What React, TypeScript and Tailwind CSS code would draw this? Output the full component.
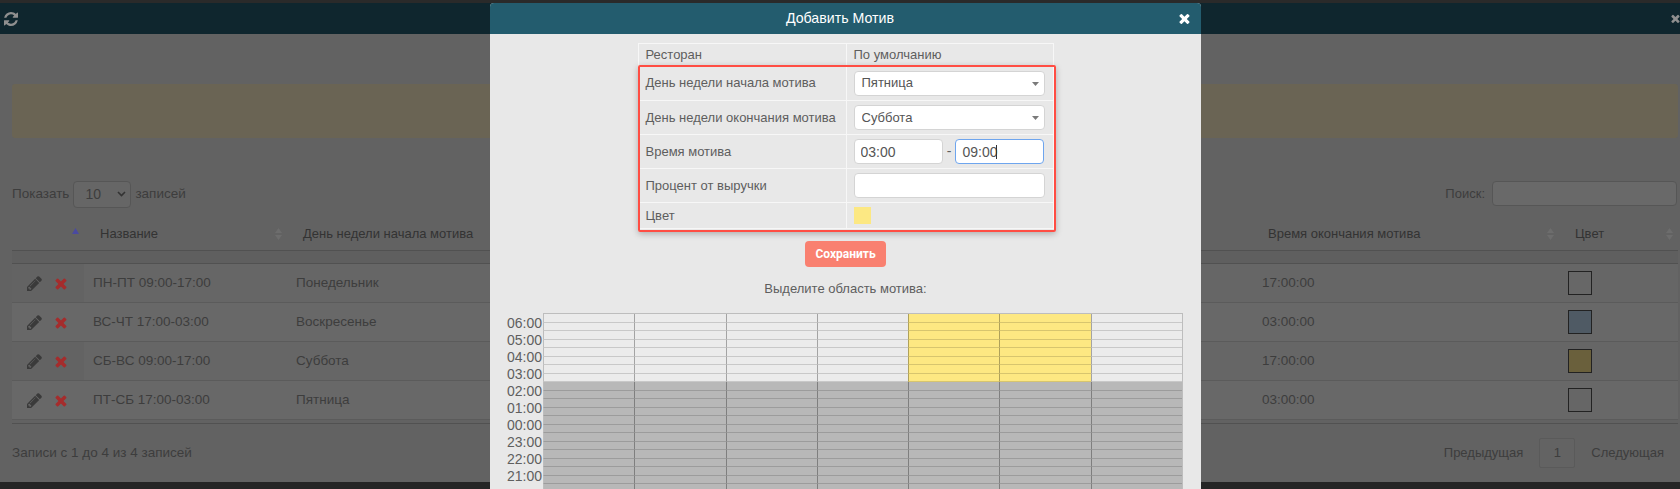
import React from 'react'

const rows = [
  { name: 'ПН-ПТ 09:00-17:00', day: 'Понедельник', end: '17:00:00', color: 'bg-[#676767]', first: 'bg-[#636363]', bg: 'bg-[#666666]' },
  { name: 'ВС-ЧТ 17:00-03:00', day: 'Воскресенье', end: '03:00:00', color: 'bg-[#4f5a64]', first: 'bg-[#686868]', bg: 'bg-[#686868]' },
  { name: 'СБ-ВС 09:00-17:00', day: 'Суббота', end: '17:00:00', color: 'bg-[#6a603c]', first: 'bg-[#636363]', bg: 'bg-[#666666]' },
  { name: 'ПТ-СБ 17:00-03:00', day: 'Пятница', end: '03:00:00', color: 'bg-[#666666]', first: 'bg-[#686868]', bg: 'bg-[#686868]' },
]

const hours = [6, 5, 4, 3, 2, 1, 0, 23, 22, 21]

// font awesome 4 glyphs, the 5 ones in react-icons are thinner
const TimesIcon = ({ className }: { className?: string }) => (
  <svg viewBox="250 250 1300 1300" fill="currentColor" className={className}>
    <path d="M1490 1322q0 40-28 68l-136 136q-28 28-68 28t-68-28l-294-294-294 294q-28 28-68 28t-68-28l-136-136q-28-28-28-68t28-68l294-294-294-294q-28-28-28-68t28-68l136-136q28-28 68-28t68 28l294 294 294-294q28-28 68-28t68 28l136 136q28 28 28 68t-28 68l-294 294 294 294q28 28 28 68z" />
  </svg>
)

const PencilIcon = ({ className }: { className?: string }) => (
  <svg viewBox="128 128 1536 1536" fill="currentColor" className={className}>
    <path d="M491 1536l91-91-235-235-91 91v107h128v128h107zm523-928q0-22-22-22-10 0-17 7l-542 542q-7 7-7 17 0 22 22 22 10 0 17-7l542-542q7-7 7-17zm-54-192l416 416-832 832h-416v-416zm683 96q0 53-37 90l-166 166-416-416 166-165q36-38 90-38 53 0 91 38l235 234q37 39 37 91z" />
  </svg>
)

const RefreshIcon = ({ className }: { className?: string }) => (
  <svg viewBox="128 128 1536 1536" fill="currentColor" className={className}>
    <path d="M1639 1056q0 5-1 7-64 268-268 434.5t-478 166.5q-146 0-282.5-55t-243.5-157l-129 129q-19 19-45 19t-45-19-19-45v-448q0-26 19-45t45-19h448q26 0 45 19t19 45-19 45l-137 137q71 66 161 102t187 36q134 0 250-65t186-179q11-17 53-117 8-23 30-23h192q13 0 22.5 9.5t9.5 22.5zm25-800v448q0 26-19 45t-45 19h-448q-26 0-45-19t-19-45 19-45l138-138q-148-137-349-137-134 0-250 65t-186 179q-11 17-53 117-8 23-30 23h-199q-13 0-22.5-9.5t-9.5-22.5v-7q65-268 270-434.5t480-166.5q146 0 284 55.5t245 156.5l130-129q19-19 45-19t45 19 19 45z" />
  </svg>
)

const SortIcon = () => (
  <svg width="7" height="12" viewBox="0 0 7 12" className="shrink-0">
    <path d="M3.5 0 7 5H0zM3.5 12 0 7h7z" fill="#6d6d6d" />
  </svg>
)

const Background = () => {
  return (
    <div className="flex h-[489px] flex-col bg-[#626262] text-[13.5px] text-[#3d3d3d]">
      <div className="h-[3px] bg-[#2a2a2a]" />
      <div className="flex h-[31px] items-center justify-between bg-[#0f262e] pl-[4px] text-[#8f8f8f]">
        <RefreshIcon className="h-[14px] w-[14px]" />
        <TimesIcon className="h-[11px] w-[9px]" />
      </div>

      <div className="ml-[12px] mr-[2px] mt-[50px] h-[54px] rounded-[3px] bg-[#6a6454]" />

      <div className="ml-[12px] mr-[3px] mt-[43px] flex h-[26px] items-center justify-between">
        <div className="flex items-center gap-[4px]">
          <span>Показать</span>
          <div className="flex h-[27px] w-[58px] items-center justify-between rounded-[4px] border border-[#565656] bg-[#666666] pl-[11px] pr-[4px] text-[14px]">
            10
            <svg width="9" height="6" viewBox="0 0 9 6"><path d="M1 1l3.5 3.5L8 1" fill="none" stroke="#333" strokeWidth="1.6" /></svg>
          </div>
          <span>записей</span>
        </div>
        <div className="flex items-center gap-[7px] self-start">
          <span className="text-[13px] leading-[25px]">Поиск:</span>
          <div className="h-[25px] w-[185px] rounded-[4px] border border-[#565656] bg-[#696969]" />
        </div>
      </div>

      <div className="ml-[12px] mr-[2px] mt-[13px] grid h-[31px] grid-cols-[72px_203px_1fr_306px_119px] items-center border-b border-[#515151] pb-[2px] text-[13px] text-[#333333]">
        <div className="flex justify-end pb-[7px] pr-[5px]">
          <svg width="7" height="6" viewBox="0 0 7 6"><path d="M3.5 0 7 6H0z" fill="#4a4aa0" /></svg>
        </div>
        <div className="flex items-center justify-between pl-[16px] pr-[5px]">Название<SortIcon /></div>
        <div className="pl-[16px]">День недели начала мотива</div>
        <div className="flex items-center justify-between pl-[15px] pr-[5px]">Время окончания мотива<SortIcon /></div>
        <div className="flex items-center pl-[16px]">Цвет<span className="ml-auto pr-[5px]"><SortIcon /></span></div>
      </div>
      <div className="ml-[12px] mr-[2px] h-[13px] border-b border-[#515151] bg-[#5f5f5f]" />

      <div className="ml-[12px] mr-[2px] flex flex-col">
        {rows.map((r) => (
          <div key={r.name} className={`grid h-[39px] grid-cols-[72px_203px_1fr_306px_119px] items-center border-b border-[#5b5b5b] ${r.bg}`}>
            <div className={`flex h-full items-center gap-[13px] pl-[15px] ${r.first}`}>
              <PencilIcon className="h-[15px] w-[15px] text-[#3a3a3a]" />
              <TimesIcon className="h-[13px] w-[12px] text-[#a52c2c]" />
            </div>
            <div className="pl-[9px]">{r.name}</div>
            <div className="pl-[9px]">{r.day}</div>
            <div className="pl-[9px]">{r.end}</div>
            <div className="pl-[9px]">
              <div className={`h-[24px] w-[24px] border-[1.5px] border-[#222222] ${r.color}`} />
            </div>
          </div>
        ))}
      </div>
      <div className="ml-[12px] mr-[2px] mt-[3px] border-t border-[#515151]" />

      <div className="ml-[12px] mr-[16px] flex flex-1 items-center justify-between">
        <span>Записи с 1 до 4 из 4 записей</span>
        <div className="flex items-center gap-[16px] text-[13px]">
          <span>Предыдущая</span>
          <div className="flex h-[30px] w-[36px] items-center justify-center rounded-[2px] border border-[#5a5a5a] bg-[#636363]">1</div>
          <span>Следующая</span>
        </div>
      </div>
      <div className="h-[7px] bg-[#252525]" />
    </div>
  )
}

const FormRow = ({ label, children, h }: { label: string; children: React.ReactNode; h: string }) => (
  <tr className={h}>
    <td className="border border-[#f7f7f7] pl-[7px] align-middle">{label}</td>
    <td className="border border-[#f7f7f7] px-[7px] align-middle">{children}</td>
  </tr>
)

const SelectBox = ({ value }: { value: string }) => (
  <div className="relative h-[25px] w-[191px]">
    <select
      defaultValue={value}
      className="h-full w-full appearance-none rounded-[4px] border border-[#d4d4d4] bg-white pl-[7px] text-[13px] text-[#555555]"
    >
      <option>{value}</option>
    </select>
    <svg width="7" height="4" viewBox="0 0 7 4" className="absolute right-[6px] top-[11px]">
      <path d="M0 0h7L3.5 4z" fill="#7a7a7a" />
    </svg>
  </div>
)

const TimeGrid = () => {
  return (
    <div className="flex items-start">
      <div className="mt-[2px] flex w-[53px] flex-col items-end pr-[1px] text-[14px] leading-[17px] text-[#5f5f5f]">
        {hours.map((h) => (
          <div key={h}>{String(h).padStart(2, '0')}:00</div>
        ))}
      </div>
      <div className="grid w-[640px] grid-cols-7 border-r border-t border-[#bdbdbd]">
        {Array.from({ length: 30 * 7 }).map((_, i) => {
          const row = Math.floor(i / 7)
          const col = i % 7
          let bg = 'bg-[#ebebeb]'
          if (row >= 8) bg = 'bg-[#b8b8b8]'
          else if (col === 4 || col === 5) bg = 'bg-[#fde882]'
          return (
            <div
              key={i}
              className={`h-[8.5px] border-b border-l border-b-[#00000026] ${col === 0 ? 'border-l-[#bdbdbd]' : 'border-l-[#0000004d]'} ${bg}`}
            />
          )
        })}
      </div>
    </div>
  )
}

const Modal = () => {
  return (
    <div className="absolute left-[490px] top-[3px] w-[711px] overflow-hidden rounded-t-[4px] bg-[#e8e8e8] text-[13px] text-[#5e5e5e]">
      <div className="relative flex h-[31px] items-center justify-center bg-[#235c6e] pr-[11px] text-[14.2px] text-white">
        Добавить Мотив
        <TimesIcon className="absolute right-[11px] top-[10px] h-[11px] w-[11px]" />
      </div>

      <div className="flex flex-col items-center">
        <div className="relative mt-[9px]">
          <table className="w-[416px] table-fixed border-collapse">
            <tbody>
              <tr className="h-[22px]">
                <td className="w-[208px] border border-[#f7f7f7] pl-[7px]">Ресторан</td>
                <td className="border border-[#f7f7f7] pl-[7px]">По умолчанию</td>
              </tr>
              <FormRow h="h-[35px]" label="День недели начала мотива"><SelectBox value="Пятница" /></FormRow>
              <FormRow h="h-[34px]" label="День недели окончания мотива"><SelectBox value="Суббота" /></FormRow>
              <FormRow h="h-[34px]" label="Время мотива">
                <div className="flex w-[191px] items-center justify-between text-[14px]">
                  <input value="03:00" readOnly className="h-[25px] w-[89px] rounded-[4px] border border-[#d4d4d4] bg-white pl-[6px] text-[#555555]" />
                  <span>-</span>
                  <div className="relative">
                    <input value="09:00" readOnly className="h-[25px] w-[89px] rounded-[4px] border-[1.5px] border-[#6ea5ee] bg-white pl-[6px] text-[#555555] outline-none" />
                    <div className="absolute left-[41px] top-[6px] h-[14px] w-px bg-[#333333]" />
                  </div>
                </div>
              </FormRow>
              <FormRow h="h-[34px]" label="Процент от выручки">
                <input readOnly className="block h-[25px] w-[191px] rounded-[4px] border border-[#d4d4d4] bg-white" />
              </FormRow>
              <FormRow h="h-[26px]" label="Цвет">
                <div className="h-[17px] w-[17px] bg-[#fce883]" />
              </FormRow>
            </tbody>
          </table>
          <div className="pointer-events-none absolute left-0 top-[22px] h-[167px] w-[418px] rounded-[2px] border-2 border-[#ff4d43] shadow-[0_2px_6px_rgba(0,0,0,0.25)]" />
        </div>

        <button className="mt-[12px] h-[26px] w-[81px] rounded-[4px] bg-[#f98070] font-['Roboto',sans-serif] text-[12px] font-bold text-white">
          Сохранить
        </button>

        <div className="mt-[13px] leading-[18px]">Выделите область мотива:</div>

        <div className="mt-[15px] w-full">
          <TimeGrid />
        </div>
      </div>
    </div>
  )
}

const App = () => {
  return (
    <div className="relative h-[489px] w-[1680px] overflow-hidden font-['Liberation_Sans',Arial,sans-serif]">
      <Background />
      <Modal />
    </div>
  )
}

export default App
